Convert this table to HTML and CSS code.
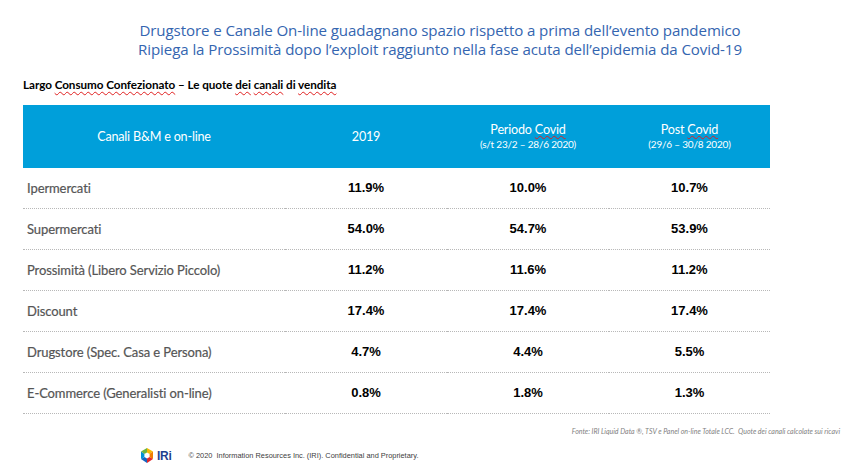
FILE: index.html
```html
<!DOCTYPE html>
<html lang="it">
<head>
<meta charset="utf-8">
<title>Quote dei canali di vendita</title>
<link rel="stylesheet" href="styles.css">
</head>
<body>
<div class="slide">
  <header class="title">
    <div>Drugstore e Canale On-line guadagnano spazio rispetto a prima dell’evento pandemico</div>
    <div>Ripiega la Prossimità dopo l’exploit raggiunto nella fase acuta dell’epidemia da Covid-19</div>
  </header>
  <div class="subtitle">Largo <span class="sp">Consumo Confezionato</span> – Le quote <span class="sp">dei</span> <span class="sp">canali</span> di <span class="sp">vendita</span></div>
  <div class="table">
    <div class="th">Canali B&amp;M e on-line</div>
    <div class="th">2019</div>
    <div class="th"><div>Periodo <span class="sp">Covid</span></div><div class="small">(s/t 23/2 – 28/6 2020)</div></div>
    <div class="th"><div>Post <span class="sp">Covid</span></div><div class="small">(29/6 – 30/8 2020)</div></div>

    <div class="row">
      <div class="label">Ipermercati</div><div class="val">11.9%</div><div class="val">10.0%</div><div class="val">10.7%</div>
    </div>
    <div class="row">
      <div class="label">Supermercati</div><div class="val">54.0%</div><div class="val">54.7%</div><div class="val">53.9%</div>
    </div>
    <div class="row">
      <div class="label">Prossimità (Libero Servizio Piccolo)</div><div class="val">11.2%</div><div class="val">11.6%</div><div class="val">11.2%</div>
    </div>
    <div class="row">
      <div class="label">Discount</div><div class="val">17.4%</div><div class="val">17.4%</div><div class="val">17.4%</div>
    </div>
    <div class="row">
      <div class="label">Drugstore (Spec. Casa e Persona)</div><div class="val">4.7%</div><div class="val">4.4%</div><div class="val">5.5%</div>
    </div>
    <div class="row">
      <div class="label">E-Commerce (Generalisti on-line)</div><div class="val">0.8%</div><div class="val">1.8%</div><div class="val">1.3%</div>
    </div>
  </div>
  <div class="source">Fonte: IRI Liquid Data ®, TSV e Panel on-line Totale LCC.&nbsp; Quote dei canali calcolate sui ricavi</div>
  <footer class="footer">
    <div class="logo">
      <svg width="14" height="15" viewBox="0 0 14 15" aria-hidden="true">
        <polygon points="7,0 13,3.5 7,7.5" fill="#f6b800"/>
        <polygon points="13,3.5 13,11 7,7.5" fill="#f07d00"/>
        <polygon points="13,11 7,15 7,7.5" fill="#e3262a"/>
        <polygon points="7,15 1,11 7,7.5" fill="#1565c0"/>
        <polygon points="1,11 1,3.5 7,7.5" fill="#0091d5"/>
        <polygon points="1,3.5 7,0 7,7.5" fill="#6cb33f"/>
        <polygon points="7,4.5 9.6,6 9.6,9 7,10.5 4.4,9 4.4,6" fill="#ffffff"/>
      </svg>
      <span class="iri">IRi</span>
    </div>
    <div class="copy">© 2020&nbsp; Information Resources Inc. (IRI). Confidential and Proprietary.</div>
  </footer>
</div>
</body>
</html>
```

FILE: styles.css
```css
* { box-sizing: border-box; }
html, body { margin: 0; padding: 0; background: #ffffff; }
.slide {
  width: 852px;
  height: 476px;
  position: relative;
  overflow: hidden;
  font-family: "Open Sans", "Noto Sans", sans-serif;
}
.title {
  padding-top: 21px;
  padding-left: 28px;
  text-align: center;
  color: #3465b0;
  font-size: 15.1px;
  line-height: 19px;
  letter-spacing: -0.1px;
}
.subtitle {
  margin-top: 18px;
  margin-left: 23px;
  font-family: "Lato", "Open Sans", sans-serif;
  font-weight: 700;
  font-size: 11.7px;
  color: #000;
  letter-spacing: -0.05px;
  height: 16px;
}
.sp {
  text-decoration: underline wavy #e02020;
  text-decoration-thickness: 1px;
  text-underline-offset: 2px;
}
.table {
  margin-top: 12px;
  margin-left: 23px;
  width: 747px;
  display: grid;
  grid-template-columns: 262px 162px 162px 161px;
}
.th {
  background: #009fda;
  color: #fff;
  height: 63px;
  display: flex;
  flex-direction: column;
  align-items: center;
  justify-content: center;
  font-family: "Lato", "Open Sans", sans-serif;
  font-size: 12.6px;
  line-height: 15px;
  letter-spacing: -0.2px;
  text-align: center;
}
.th .small {
  font-size: 10px;
  line-height: 14px;
}
.th .sp { text-decoration-color: #e02020; text-underline-offset: 1px; }
.row {
  display: contents;
}
.row > div {
  height: 41px;
  display: flex;
  align-items: center;
  border-bottom: 1px dotted #b8b8b8;
}
.label {
  padding-left: 4px;
  padding-bottom: 1px;
  color: #555555;
  font-family: "Lato", "Open Sans", sans-serif;
  font-size: 13px;
  letter-spacing: -0.1px;
  -webkit-text-stroke: 0.2px #555555;
}
.val {
  justify-content: center;
  font-family: "Liberation Sans", Arial, sans-serif;
  font-weight: 700;
  font-size: 13px;
  color: #000;
  padding-bottom: 1px;
}
.source {
  margin-top: 13px;
  padding-right: 12px;
  text-align: right;
  font-family: "Lato", "Open Sans", sans-serif;
  font-style: italic;
  font-size: 7px;
  color: #7f7f7f;
}
.footer {
  margin-top: 13px;
  margin-left: 140px;
  display: flex;
  align-items: center;
  gap: 17px;
}
.logo {
  display: flex;
  align-items: center;
  gap: 3px;
}
.iri {
  font-family: "Liberation Sans", Arial, sans-serif;
  font-weight: 700;
  font-size: 12px;
  color: #1d3f8f;
  letter-spacing: -0.3px;
}
.copy {
  font-family: "Liberation Sans", Arial, sans-serif;
  font-size: 7.4px;
  color: #404040;
}
```
